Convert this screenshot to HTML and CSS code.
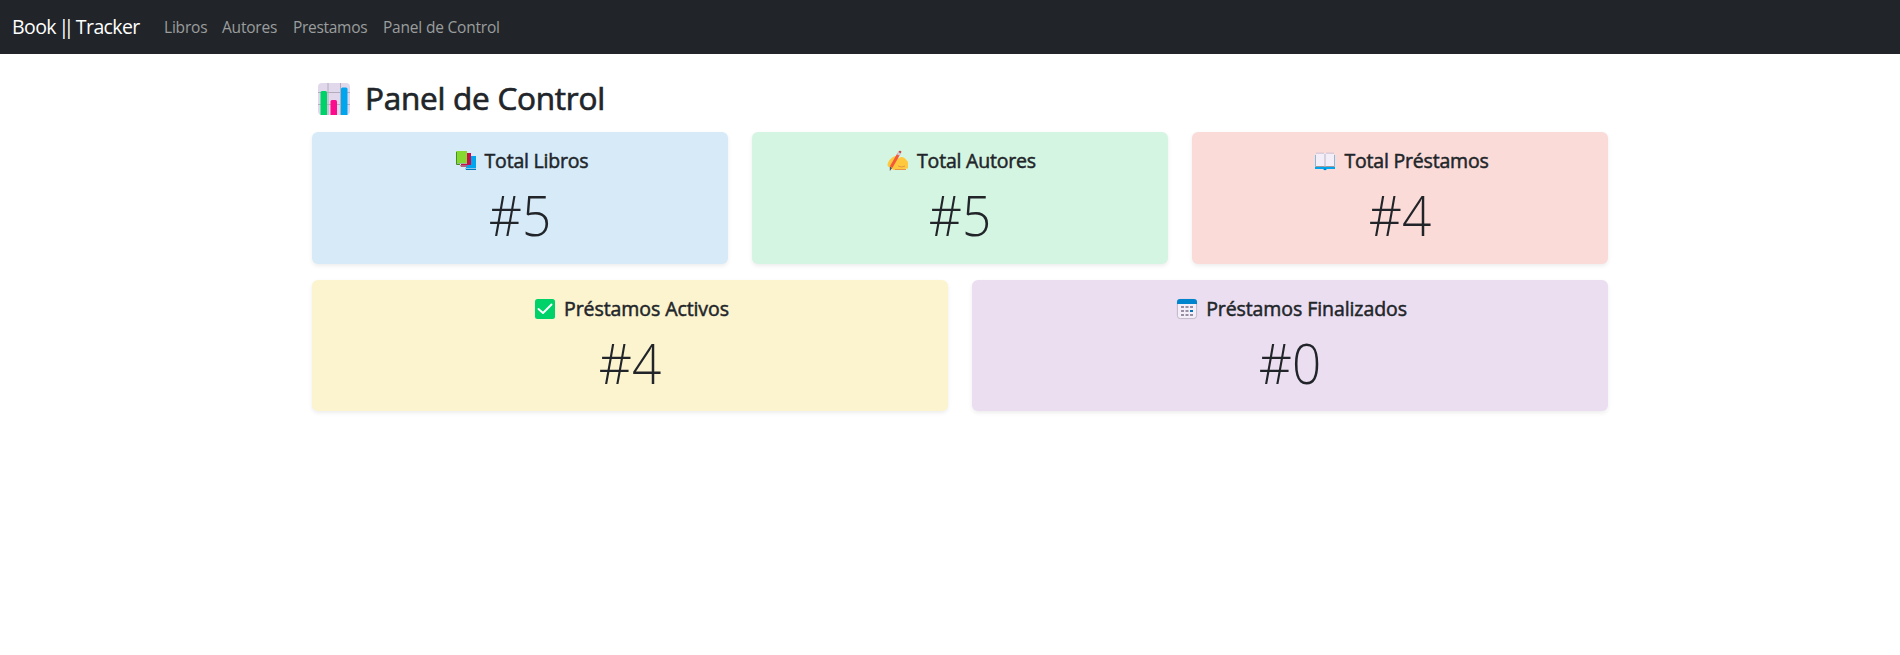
FILE: index.html
```html
<!DOCTYPE html>
<html lang="es">
<head>
<meta charset="utf-8">
<title>Book || Tracker</title>
<link rel="stylesheet" href="styles.css">
</head>
<body>
<nav class="navbar">
  <a class="brand">Book <span class="bars">||</span> Tracker</a>
  <a class="link libros">Libros</a>
  <a class="link autores">Autores</a>
  <a class="link prestamos">Prestamos</a>
  <a class="link panel">Panel de Control</a>
</nav>
<main class="container">
  <h2 class="heading">
    <svg class="heading-icon" viewBox="0 0 32 32"><rect width="32" height="32" rx="4" fill="#e1d8ec"/><path d="M10 0V32M22.500 0V32M0 9.500H32M0 21.500H32" stroke="#b4acbc"/><path d="M2.500 32V9.500Q2.500 8 4 8H7.500Q9 8 9 9.500V32Z" fill="#00d26a"/><path d="M12.500 32V18.500Q12.500 17 14 17H17.500Q19 17 19 18.500V32Z" fill="#fc0b8c"/><path d="M23 32V6Q23 4.500 24.500 4.500H28Q29.500 4.500 29.500 6V32Z" fill="#00a6ed"/></svg>
    <span class="heading-text">Panel de Control</span>
  </h2>
  <div class="row">
    <section class="card blue">
      <h5 class="title"><svg class="icon" viewBox="0 0 20 20"><path d="M10 5H20V17H10Z" fill="#00a6ed"/><path d="M9 17H20V19H10L9 18Z" fill="#8cc5e8"/><path d="M10 18.500H20" stroke="#0074ba"/><path d="M5 2H15V14H5Z" fill="#ca0b4a"/><path d="M4 14H11V16H5Z" fill="#b4637e"/><path d="M0 1Q0 0 1 0H11V12H0Z" fill="#86d72f"/><path d="M.5 1V13.500H4" fill="none" stroke="#44911b"/><path d="M1 12.500H11" stroke="#9bb69d"/></svg><span>Total Libros</span></h5>
      <p class="number">#5</p>
    </section>
    <section class="card green">
      <h5 class="title"><svg class="icon" viewBox="0 0 20 20"><path d="M-.5 14Q0 9 5 6Q9 4 9.500 6L10 7.500L13 6Q16 5.500 18 8.500L20 11V17.500H17.500V19H6Q4 19 4 17L0 15.500Z" fill="#ffc83d"/><path d="M7 18.500H18M10 15Q14 17 17 15" fill="none" stroke="#e19747"/><path d="M3.200 16L11 2.500" stroke="#f4583b" stroke-width="3"/><path d="M10.200 4L11.500 1.700" stroke="#d0cbd5" stroke-width="3"/><path d="M10.300 1L11 0Q12.500 -1 13.500 .7L12.700 2.500Z" fill="#ca4b4b"/><path d="M1.800 15.500L4.200 17L1.800 20Z" fill="#594c50"/></svg><span>Total Autores</span></h5>
      <p class="number">#5</p>
    </section>
    <section class="card red">
      <h5 class="title"><svg class="icon" viewBox="0 0 20 20"><path d="M0 4H20V18H12Q10 20.500 8 18H0Z" fill="#00a6ed"/><path d="M.5 4V16M19.500 4V16" stroke="#87bbdc"/><path d="M1 3Q1 2 2 2H9L10 3L11 2H18Q19 2 19 3V15H1Z" fill="#f3eef8"/><path d="M1 15.500H19" stroke="#9b9b9b"/><path d="M10 3V16" stroke="#bbb4c4"/><path d="M1 2.200H9M11 2.200H19" stroke="#b9aec4" stroke-width=".7"/><path d="M9 18Q10 19 11 18" fill="none" stroke="#0074ba"/></svg><span>Total Préstamos</span></h5>
      <p class="number">#4</p>
    </section>
  </div>
  <div class="row short">
    <section class="card yellow">
      <h5 class="title wide"><svg class="icon" viewBox="0 0 20 20"><rect width="20" height="20" rx="2.500" fill="#00d26a"/><path d="M3.500 10L8 14L16.500 5.500" fill="none" stroke="#fff" stroke-width="1.900" stroke-linecap="round" stroke-linejoin="round"/></svg><span>Préstamos Activos</span></h5>
      <p class="number">#4</p>
    </section>
    <section class="card purple">
      <h5 class="title wide"><svg class="icon" viewBox="0 0 20 20"><rect x=".4" y=".4" width="19.200" height="19.200" rx="3" fill="#f3eef8" stroke="#b4acbc" stroke-width=".8"/><path d="M0 5V3Q0 0 3 0H17Q20 0 20 3V5Z" fill="#0084ce"/><path d="M4 8H7M8.500 8H11.500M13 8H16M4 12H7M8.500 12H11.500M4 16H7M8.500 16H11.500M13 16H16" stroke="#998ea4" stroke-width="2"/><path d="M13 12H16" stroke="#0074ba" stroke-width="2"/></svg><span>Préstamos Finalizados</span></h5>
      <p class="number">#0</p>
    </section>
  </div>
</main>
</body>
</html>
```
FILE: styles.css
```css
* { box-sizing: border-box; }
body { margin: 0; background: #fff; color: #212529; font-family: "Open Sans", "Noto Sans", sans-serif; }
.navbar { display: flex; align-items: center; height: 54px; padding-left: 12px; background: #212529; white-space: nowrap; }
.brand { width: 152px; color: #fff; font-size: 19.5px; line-height: 30px; letter-spacing: -0.6px; }
.bars { margin: 0 3px 0 -2px; letter-spacing: -5.7px; }
.link { color: #9b9d9e; font-size: 15.5px; line-height: 24px; letter-spacing: -0.2px; }
.libros { width: 58px; }
.autores { width: 71px; }
.prestamos { width: 90px; letter-spacing: -0.3px; }
.container { width: 1320px; margin-left: 300px; padding: 24px 12px 0; }
.heading { display: flex; align-items: center; height: 38px; margin: 2px 0 14px; padding-left: 6px; font-size: 31.5px; font-weight: 500; line-height: 38px; letter-spacing: -0.25px; white-space: nowrap; -webkit-text-stroke: 0.7px #212529; }
.heading-icon { width: 32px; height: 32px; margin-right: 15px; }
.heading-text { padding-bottom: 2px; line-height: 36px; }
.heading-icon, .icon { -webkit-text-stroke: 0; }
.row { display: flex; gap: 24px; margin-bottom: 16px; }
.card { flex: 1; height: 132px; padding: 17px 16px 0; border-radius: 6px; box-shadow: 0 2px 4px rgba(0, 0, 0, .075); text-align: center; }
.short .card { height: 131px; }
.blue { background: #d6eaf8; }
.green { background: #d5f5e3; }
.red { background: #fadbd8; }
.yellow { background: #fcf3cf; }
.purple { background: #ebdef0; }
.title { display: flex; align-items: center; justify-content: center; height: 24px; margin: 0 0 8px; padding-left: 4px; font-size: 19.5px; font-weight: 500; line-height: 24px; letter-spacing: -0.2px; white-space: nowrap; -webkit-text-stroke: 0.5px #212529; }
.wide { letter-spacing: -0.08px; }
.icon { width: 20px; height: 20px; margin-right: 9px; overflow: visible; }
.number { margin: 0; font-size: 54.5px; font-weight: 300; line-height: 68px; transform: scaleX(.94); }
```
